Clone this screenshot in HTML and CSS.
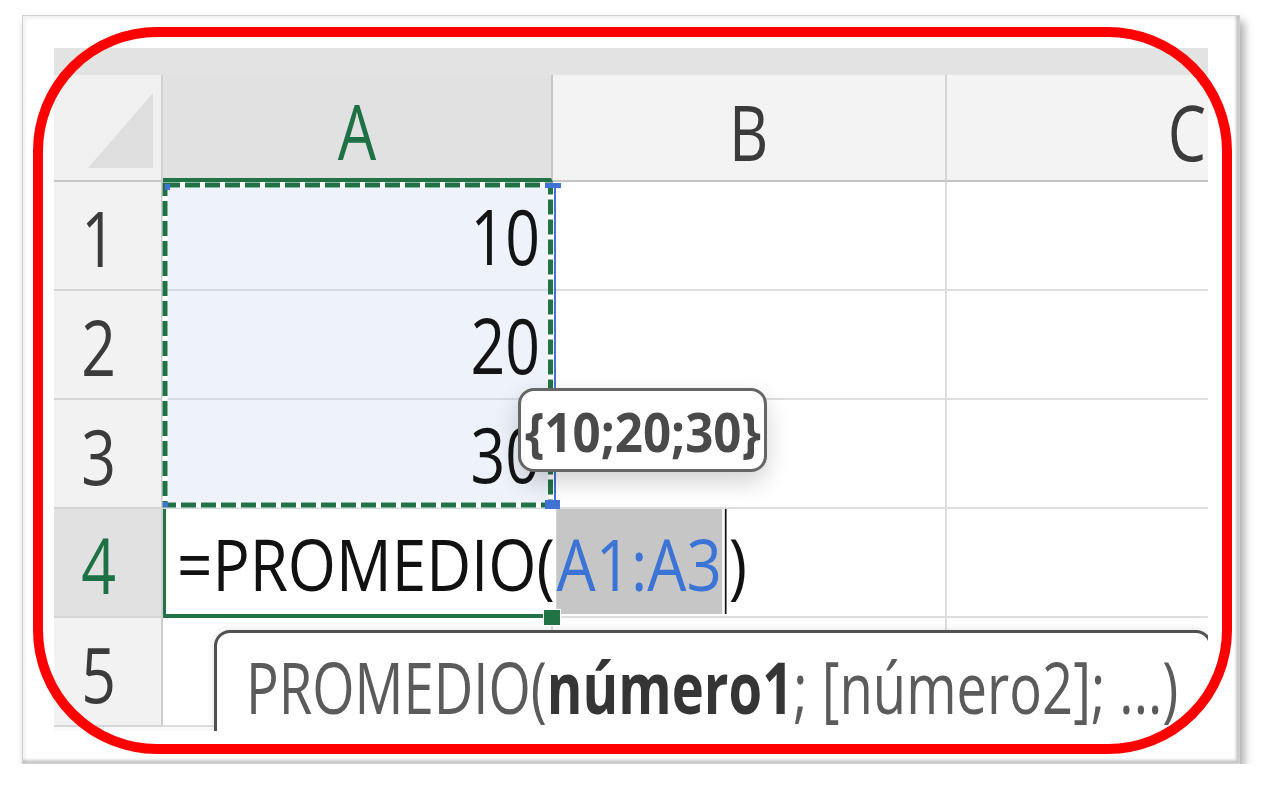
FILE: index.html
```html
<!DOCTYPE html>
<html lang="es">
<head>
<meta charset="utf-8">
<title>PROMEDIO</title>
<link rel="stylesheet" href="styles.css">
</head>
<body>
<div class="frame">
  <div class="sheet">
    <div class="strip"></div>
    <div class="corner"><svg width="65" height="75" viewBox="0 0 65 75"><polygon points="0,75 65,75 65,0" fill="#dedede"/></svg></div>
    <div class="colhead colhead-sel"><span class="glyph">A</span></div>
    <div class="colhead"><span class="glyph">B</span></div>
    <div class="colhead colhead-last"><span class="glyph">C</span></div>

    <div class="rowhead"><span class="glyph">1</span></div>
    <div class="cell cell-sel"><span class="num">10</span></div>
    <div class="cell"></div>
    <div class="cell cell-last"></div>

    <div class="rowhead"><span class="glyph">2</span></div>
    <div class="cell cell-sel"><span class="num">20</span></div>
    <div class="cell"></div>
    <div class="cell cell-last"></div>

    <div class="rowhead"><span class="glyph">3</span></div>
    <div class="cell cell-sel"><span class="num">30</span></div>
    <div class="cell"></div>
    <div class="cell cell-last"></div>

    <div class="rowhead rowhead-act"><span class="glyph">4</span></div>
    <div class="cell cell-active">
      <div class="formula"><span class="f-txt">=PROMEDIO(</span><span class="f-ref">A1:A3</span><span class="caret"></span><span class="f-txt">)</span></div>
      <span class="fill-handle"></span>
    </div>
    <div class="cell"></div>
    <div class="cell cell-last"></div>

    <div class="rowhead"><span class="glyph">5</span></div>
    <div class="cell"></div>
    <div class="cell"></div>
    <div class="cell cell-last"></div>

    <div class="tail"></div>

    <svg class="ants" width="1154" height="683" viewBox="0 0 1154 683">
      <rect x="111" y="137" width="385.5" height="320" fill="none" stroke="#ffffff" stroke-width="5"/>
      <rect x="111" y="137" width="385.5" height="320" fill="none" stroke="#217346" stroke-width="5" stroke-dasharray="15 5"/>
      <rect x="500" y="140" width="2" height="312" fill="#3f73d4"/>
      <rect x="111" y="136" width="5" height="6" fill="#3f73d4"/>
      <rect x="491" y="135" width="16" height="5" fill="#3f73d4"/>
      <rect x="109" y="454" width="5" height="5" fill="#3f73d4"/>
      <rect x="491" y="452" width="15" height="9" fill="#3f73d4"/>
    </svg>

    <div class="tip-values"><span class="tip-values-text">{10;20;30}</span></div>
    <div class="tip-syntax"><span class="tip-syntax-text">PROMEDIO(<b>número1</b>; [número2]; ...)</span></div>
  </div>
  <div class="annotation"></div>
</div>
</body>
</html>
```

FILE: styles.css
```css
* { box-sizing: border-box; }

html, body {
  margin: 0;
  background: #ffffff;
}

body {
  font-family: "Open Sans", "Noto Sans", sans-serif;
}

.frame {
  position: relative;
  width: 1218px;
  height: 749px;
  margin: 15px 0 0 22px;
  padding: 32px 0 0 31px;
  background: #ffffff;
  border: 1px solid #d2d2d2;
  box-shadow:
    inset -3px -3px 3px rgba(0, 0, 0, 0.22),
    inset 3px 3px 3px rgba(0, 0, 0, 0.05),
    4px 6px 9px rgba(0, 0, 0, 0.35);
}

.sheet {
  position: relative;
  width: 1154px;
  height: 683px;
  overflow: hidden;
  display: grid;
  grid-template-columns: 109px 390px 394px 480px;
  grid-template-rows: 27px 107px repeat(5, 109px) 1fr;
  background: #ffffff;
}

.strip {
  grid-column: 1 / -1;
  background: #e3e3e3;
}

.corner {
  background: #f0f0f0;
  border-right: 2px solid #d2d2d2;
  border-bottom: 2px solid #c6c6c6;
  display: flex;
  justify-content: flex-end;
  align-items: flex-end;
  padding: 0 8px 12px 0;
}

.colhead {
  background: #f3f3f3;
  border-right: 2px solid #d4d4d4;
  border-bottom: 2px solid #c4c4c4;
  display: flex;
  justify-content: center;
  align-items: center;
  padding-top: 9px;
  font-size: 76px;
  line-height: 1;
  color: #3b3b3b;
}

.colhead-sel {
  background: #e1e1e1;
  color: #1e7145;
  border-right-color: #c6c6c6;
  border-bottom: 4px solid #217346;
}

.colhead-last { border-right: none; }

.glyph {
  display: inline-block;
  transform: scaleX(0.8);
}

.rowhead {
  background: #f2f2f2;
  border-right: 2px solid #cdcdcd;
  border-bottom: 2px solid #d6d6d6;
  display: flex;
  justify-content: center;
  align-items: center;
  padding: 4px 18px 0 0;
  font-size: 76px;
  line-height: 1;
  color: #3b3b3b;
}

.rowhead-act {
  background: #e1e1e1;
  color: #1e7145;
}

.cell {
  border-right: 2px solid #dedede;
  border-bottom: 2px solid #dedede;
  display: flex;
  align-items: center;
  justify-content: flex-end;
  padding-right: 11px;
  font-size: 76px;
  line-height: 1;
  color: #141414;
}

.cell-last { border-right: none; }

.cell-sel {
  background: #eef2fa;
  border-bottom-color: #d6dae2;
}

.num {
  display: inline-block;
  transform: scaleX(0.8);
  transform-origin: right center;
}

.cell-active {
  position: relative;
  z-index: 2;
  justify-content: flex-start;
  padding: 0 0 0 11px;
  border-right: none;
  border-left: 3px solid #217346;
  border-bottom: 4px solid #217346;
  background: #ffffff;
}

.formula {
  display: flex;
  align-items: stretch;
  flex: none;
  height: 105px;
  padding-top: 3px;
  font-size: 72px;
  line-height: 102px;
  white-space: nowrap;
  color: #111111;
  transform: scaleX(0.86);
  transform-origin: left center;
}

.f-ref {
  background: #c6c6c6;
  color: #3c74d6;
  margin: -3px 0 0 2px;
  padding-top: 3px;
}

.caret {
  width: 2px;
  margin: -3px 3px 0 3px;
  background: #111111;
}

.fill-handle {
  position: absolute;
  right: -7px;
  bottom: -11px;
  width: 16px;
  height: 15px;
  background: #217346;
  box-shadow: 0 0 0 1px #ffffff;
}

.tail {
  grid-column: 1 / -1;
  background: #fafafa;
}

.ants {
  position: absolute;
  left: 0;
  top: 0;
  z-index: 3;
  pointer-events: none;
}

.tip-values {
  position: absolute;
  left: 464px;
  top: 340px;
  width: 249px;
  height: 84px;
  z-index: 4;
  display: flex;
  align-items: center;
  justify-content: center;
  padding-top: 3px;
  background: #ffffff;
  border: 3px solid #666666;
  border-radius: 16px;
  box-shadow: 0 10px 24px rgba(0, 0, 0, 0.18);
  font-weight: 700;
  font-size: 53px;
  line-height: 1;
  color: #4a4a4a;
}

.tip-values-text {
  display: inline-block;
  transform: scaleX(0.93);
}

.tip-syntax {
  position: absolute;
  left: 160px;
  top: 582px;
  width: 998px;
  height: 101px;
  z-index: 4;
  padding: 17px 0 0 29px;
  background: #ffffff;
  border: 3px solid #505050;
  border-bottom: none;
  border-radius: 16px 16px 0 0;
  box-shadow: 0 0 8px rgba(0, 0, 0, 0.12);
  font-size: 54.4px;
  line-height: 1;
  white-space: nowrap;
  color: #5b5b5b;
}

.tip-syntax-text {
  display: inline-block;
  transform: scaleY(1.3235);
  transform-origin: left top;
}

.tip-syntax-text b {
  font-weight: 700;
  color: #353535;
}

.annotation {
  position: absolute;
  left: 10px;
  top: 11px;
  width: 1199px;
  height: 727px;
  z-index: 10;
  border: 10px solid #ff0000;
  border-radius: 124px;
  pointer-events: none;
}
```
